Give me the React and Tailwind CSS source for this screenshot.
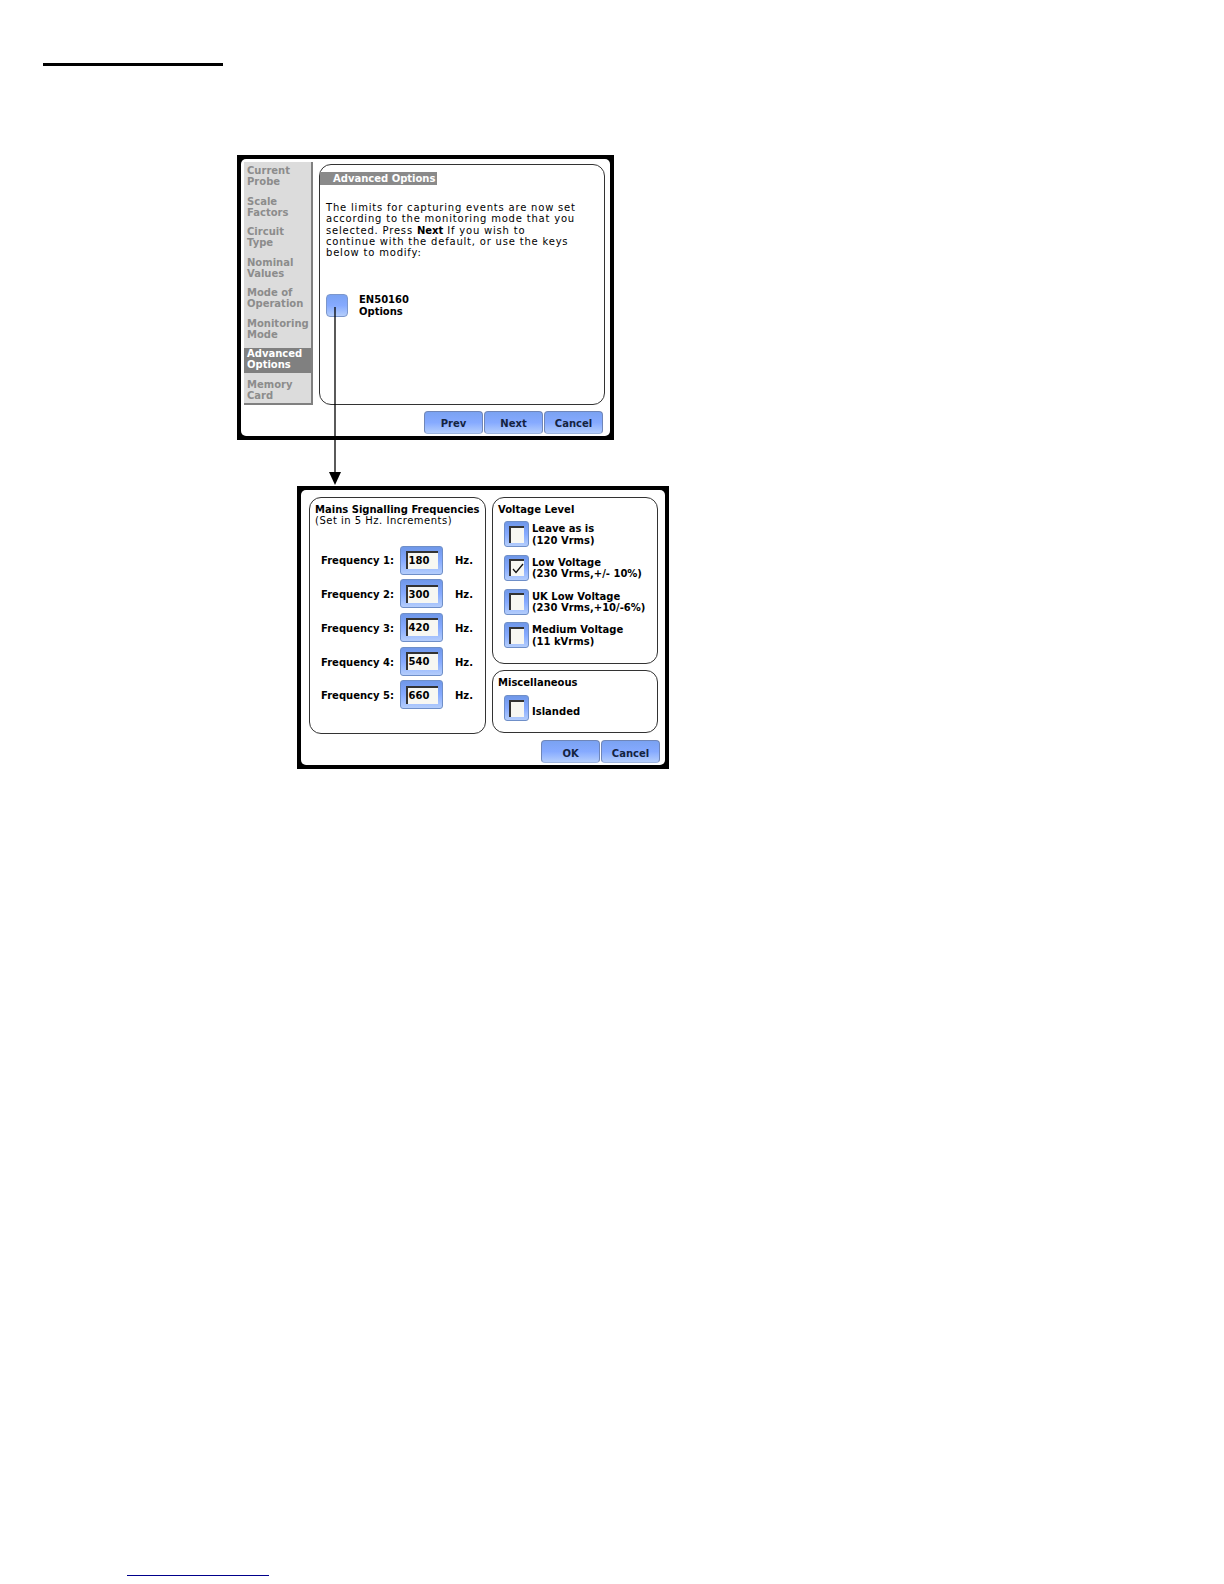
const sideItems = [
  ["Current", "Probe"],
  ["Scale", "Factors"],
  ["Circuit", "Type"],
  ["Nominal", "Values"],
  ["Mode of", "Operation"],
  ["Monitoring", "Mode"],
  ["Advanced", "Options"],
  ["Memory", "Card"],
];

const frequencies = ["180", "300", "420", "540", "660"];

const voltages = [
  { top: "Leave as is", bottom: "(120 Vrms)" },
  { top: "Low Voltage", bottom: "(230 Vrms,+/- 10%)", checked: true },
  { top: "UK Low Voltage", bottom: "(230 Vrms,+10/-6%)" },
  { top: "Medium Voltage", bottom: "(11 kVrms)" },
];

function GlossButton({ label, className = "" }) {
  return (
    <div
      className={`h-[23px] flex items-center justify-center rounded-[4px] border border-[#6f86b8] border-b-[#9db5e0] bg-linear-to-b from-[#7aa2f2] via-[#86aaff] to-[#b4cdfb] text-[#14233f] font-bold ${className}`}
    >
      {label}
    </div>
  );
}

function Check({ checked }) {
  return (
    <div className="w-[25px] h-[26px] shrink-0 flex items-center justify-center rounded-[3px] border border-[#6f8fc8] bg-linear-to-b from-[#6f97e8] via-[#86aaff] to-[#b4cdfb]">
      <div className="w-[15px] h-[17px] bg-[#f7f7f2] border-t-2 border-l-2 border-[#333333] flex items-center justify-center">
        {checked && (
          <svg width="12" height="11" viewBox="0 0 12 11" fill="none">
            <path d="M1 6 L4 9.5 L11 1" stroke="#111111" strokeWidth="1.3" />
          </svg>
        )}
      </div>
    </div>
  );
}

function App() {
  return (
    <div
      className="relative w-[1224px] h-[1584px] bg-white overflow-hidden text-[10px] leading-[11.3px] text-black"
      style={{ fontFamily: '"DejaVu Sans", sans-serif' }}
    >
      {/* page header rule */}
      <div className="ml-[43px] mt-[63px] w-[180px] h-[3px] bg-black" />

      {/* wizard screen */}
      <div className="ml-[237px] mt-[89px] w-[377px] h-[285px] bg-black p-[4px]">
        <div className="h-full bg-white rounded-[5px] px-[3px] pt-[3px]">
          <div className="flex gap-[6px]">
            <div className="w-[69px] h-[243px] pt-[3px] bg-[#dcdcdc] border-r-2 border-b-2 border-[#808080] font-bold text-[#8c8c8c]">
              {sideItems.map((item) => {
                const active = item[0] === "Advanced";
                return (
                  <div
                    key={item[0]}
                    className={`h-[24.5px] mb-[6px] pl-[3px] ${active ? "bg-[#808080] text-white" : ""}`}
                  >
                    {item[0]}
                    <br />
                    {item[1]}
                  </div>
                );
              })}
            </div>
            <div className="mt-[2px] w-[286px] h-[241px] border border-[#333333] rounded-[12px] pt-[7px]">
              <div className="w-[117px] h-[13px] bg-[#8a8a8a] text-white font-bold pl-[13px] leading-[13px]">
                Advanced Options
              </div>
              <p className="ml-[6px] mt-[17px] whitespace-nowrap tracking-[0.8px]">
                The limits for capturing events are now set
                <br />
                according to the monitoring mode that you
                <br />
                selected. Press <b className="tracking-normal">Next</b> If you wish to
                <br />
                continue with the default, or use the keys
                <br />
                below to modify:
              </p>
              <div className="ml-[6px] mt-[36px] flex gap-[11px]">
                <div className="w-[22px] h-[23px] rounded-[4px] border border-[#7c97cc] bg-linear-to-b from-[#7aa2f2] via-[#86aaff] to-[#b4cdfb]" />
                <div className="font-bold">
                  EN50160
                  <br />
                  Options
                </div>
              </div>
            </div>
          </div>
          <div className="flex justify-end gap-[1px] mt-[6px] pr-[4px]">
            <GlossButton label="Prev" className="w-[59px] pt-[2px]" />
            <GlossButton label="Next" className="w-[59px] pt-[2px]" />
            <GlossButton label="Cancel" className="w-[59px] pt-[2px]" />
          </div>
        </div>
      </div>

      {/* EN50160 options screen */}
      <div className="ml-[297px] mt-[46px] w-[372px] h-[283px] bg-black p-[4px]">
        <div className="h-full bg-white rounded-[5px] pl-[8px] pr-[5px] pt-[7px]">
          <div className="flex gap-[6px]">
            <div className="w-[177px] h-[237px] border border-[#333333] rounded-[12px] pl-[5px] pt-[6px]">
              <div className="font-bold whitespace-nowrap">Mains Signalling Frequencies</div>
              <div className="whitespace-nowrap tracking-[0.5px]">(Set in 5 Hz. Increments)</div>
              <div className="mt-[19px] flex flex-col gap-[4.7px]">
                {frequencies.map((value, i) => (
                  <div key={value} className="flex items-center font-bold">
                    <span className="w-[85px] pl-[6px] pt-[2px] whitespace-nowrap">Frequency {i + 1}:</span>
                    <div className="w-[43px] h-[29px] flex items-center justify-center rounded-[3px] border border-[#6f8fc8] bg-linear-to-b from-[#6f97e8] via-[#86aaff] to-[#b4cdfb]">
                      <div className="w-[32px] h-[18px] bg-[#f7f7f2] border-t-2 border-l-2 border-[#333333] pl-[1px] leading-[15px]">
                        {value}
                      </div>
                    </div>
                    <span className="ml-[12px] pt-[2px]">Hz.</span>
                  </div>
                ))}
              </div>
            </div>

            <div className="w-[166px] flex flex-col gap-[6px]">
              <div className="h-[167px] border border-[#333333] rounded-[12px] pl-[5px] pt-[6px]">
                <div className="font-bold">Voltage Level</div>
                <div className="mt-[6px] pl-[6px] flex flex-col gap-[7.7px]">
                  {voltages.map((v) => (
                    <div key={v.top} className="flex gap-[3px] font-bold">
                      <Check checked={v.checked} />
                      <div className="whitespace-nowrap pt-[2px]">
                        {v.top}
                        <br />
                        {v.bottom}
                      </div>
                    </div>
                  ))}
                </div>
              </div>
              <div className="h-[63px] border border-[#333333] rounded-[12px] pl-[5px] pt-[6px]">
                <div className="font-bold">Miscellaneous</div>
                <div className="mt-[7px] pl-[6px] flex items-center gap-[3px] font-bold">
                  <Check />
                  <span className="mt-[6px]">Islanded</span>
                </div>
              </div>
            </div>
          </div>
          <div className="flex justify-end gap-[1px] mt-[6px]">
            <GlossButton label="OK" className="w-[59px] pt-[4px]" />
            <GlossButton label="Cancel" className="w-[59px] pt-[4px]" />
          </div>
        </div>
      </div>

      {/* footer link rule */}
      <div className="ml-[127px] mt-[806px] w-[142px] h-px bg-[#00008b]" />

      {/* arrow joining the button to the options screen */}
      <svg className="absolute left-[329px] top-[307px]" width="12" height="180" viewBox="0 0 12 180">
        <line x1="6" y1="0" x2="6" y2="167" stroke="#000000" strokeWidth="1.3" />
        <polygon points="0,165 12,165 6,178" fill="#000000" />
      </svg>
    </div>
  );
}

export default App;
